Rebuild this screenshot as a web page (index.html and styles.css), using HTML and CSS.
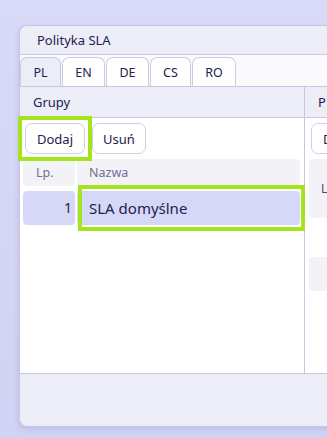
FILE: index.html
```html
<!DOCTYPE html>
<html lang="pl">
<head>
    <meta charset="UTF-8">
    <meta name="viewport" content="width=device-width, initial-scale=1.0">
    <title>Polityka SLA</title>
    <link rel="stylesheet" href="styles.css">
</head>
<body>
    <div class="window">
        <div class="title">Polityka SLA</div>

        <div class="tabs">
            <div class="tab active" style="width: 41px">PL</div>
            <div class="tab" style="width: 43px">EN</div>
            <div class="tab" style="width: 43px">DE</div>
            <div class="tab" style="width: 41px">CS</div>
            <div class="tab" style="width: 44px">RO</div>
        </div>

        <div class="panes">
            <div class="pane pane-left">
                <div class="pane-head">Grupy</div>
                <div class="pane-body">
                    <div class="toolbar">
                        <button class="btn btn-add marked">Dodaj</button>
                        <button class="btn btn-del">Usuń</button>
                    </div>
                    <div class="grid">
                        <div class="cell head lp">Lp.</div>
                        <div class="cell head">Nazwa</div>
                        <div class="cell row num">1</div>
                        <div class="cell row name marked-cell">SLA domyślne</div>
                    </div>
                </div>
            </div>
            <div class="pane pane-right">
                <div class="pane-head">P</div>
                <div class="pane-body">
                    <div class="toolbar toolbar-right">
                        <button class="btn btn-add">Dodaj</button>
                    </div>
                    <div class="card card-tall">L</div>
                    <div class="card card-short"></div>
                </div>
            </div>
        </div>

        <div class="footer"></div>
    </div>
</body>
</html>
```

FILE: styles.css
```css
body {
    margin: 0;
    padding: 25px 0 0 19px;
    height: 438px;
    box-sizing: border-box;
    overflow: hidden;
    background: linear-gradient(180deg, #d9daf8 0%, #d1d3f4 100%);
    font-family: "Noto Sans", Arial, sans-serif;
    color: #22224f;
}
.window {
    width: 400px;
    height: 402px;
    box-sizing: border-box;
    border: 1px solid #c6c7e2;
    border-radius: 8px;
    background-color: #ededf7;
    box-shadow: -1px 2px 5px rgba(90, 90, 170, 0.18);
    display: flex;
    flex-direction: column;
}
.title {
    height: 29px;
    box-sizing: border-box;
    border-bottom: 1px solid #c6c7e2;
    padding-left: 17px;
    font-size: 13px;
    line-height: 28px;
}
.tabs {
    height: 32px;
    box-sizing: border-box;
    border-bottom: 1px solid #c6c7e2;
    background-color: #fafafd;
    padding-top: 2px;
    display: flex;
    gap: 1px;
}
.tab {
    height: 29px;
    box-sizing: border-box;
    border: 1px solid #c9cae3;
    border-bottom: none;
    border-radius: 7px 7px 0 0;
    background-color: white;
    font-size: 12.5px;
    line-height: 29px;
    text-align: center;
}
.tab.active {
    background-color: #ededf7;
}
.panes {
    flex: 1;
    display: flex;
}
.pane {
    display: flex;
    flex-direction: column;
}
.pane-left {
    width: 285px;
    box-sizing: border-box;
    border-right: 1px solid #c6c7e2;
}
.pane-right {
    flex: 1;
}
.pane-head {
    height: 31px;
    box-sizing: border-box;
    border-bottom: 1px solid #c6c7e2;
    padding-left: 13px;
    font-size: 13px;
    line-height: 30px;
}
.pane-body {
    flex: 1;
    background-color: white;
}
.toolbar {
    display: flex;
    gap: 7px;
    padding: 5px 0 0 5px;
}
.toolbar-right {
    padding-left: 6px;
}
.btn {
    height: 31px;
    padding: 0;
    border: 1px solid #cfd0e6;
    border-radius: 7px;
    background-color: white;
    font-family: inherit;
    font-size: 13px;
    color: #22224f;
}
.btn-add {
    width: 60px;
}
.btn-del {
    width: 54px;
}
.marked {
    position: relative;
}
.marked::after {
    content: "";
    position: absolute;
    left: -8px;
    right: -8px;
    top: -8px;
    bottom: -8px;
    border: 4px solid #a3e41d;
}
.grid {
    display: grid;
    grid-template-columns: 52px 223px;
    grid-template-rows: 27px 34px;
    column-gap: 2px;
    row-gap: 5px;
    padding: 5px 0 0 3px;
}
.cell {
    border-radius: 4px;
    padding-left: 12px;
}
.cell.head {
    background-color: #f2f2f7;
    color: #6f6f96;
    font-size: 12.5px;
    line-height: 27px;
}
.cell.lp {
    padding-left: 13px;
}
.cell.row {
    background-color: #d6d8f8;
    line-height: 34px;
}
.cell.num {
    text-align: right;
    padding-right: 3px;
    font-size: 14px;
}
.cell.name {
    font-size: 15px;
}
.marked-cell {
    position: relative;
}
.marked-cell::after {
    content: "";
    position: absolute;
    left: 1px;
    right: -5px;
    top: -6px;
    bottom: -6px;
    border: 4px solid #a3e41d;
}
.card {
    margin-left: 4px;
    border-radius: 4px;
    background-color: #f2f2f7;
    padding-left: 12px;
    font-size: 12px;
    color: #4a4a7a;
}
.card-tall {
    margin-top: 5px;
    height: 59px;
    line-height: 59px;
}
.card-short {
    margin-top: 39px;
    height: 34px;
}
.footer {
    height: 53px;
    box-sizing: border-box;
    border-top: 1px solid #c6c7e2;
    border-radius: 0 0 8px 8px;
}
```
